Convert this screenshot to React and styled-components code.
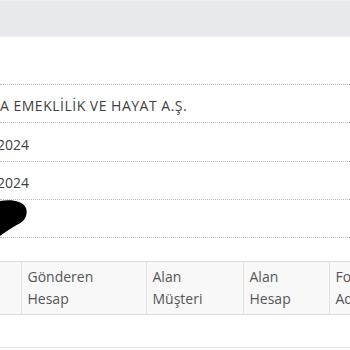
import React from "react";
import styled, { createGlobalStyle } from "styled-components";

const GlobalStyle = createGlobalStyle`
  html, body {
    margin: 0;
    padding: 0;
    background: #fff;
    font-family: "Open Sans", "Liberation Sans", sans-serif;
    overflow: hidden;
  }
`;

const Page = styled.div`
  width: 350px;
  height: 350px;
  overflow: hidden;
  display: flex;
  flex-direction: column;
`;

const TopBand = styled.div`
  height: 35px;
  background: #e7e9ec;
  border-top: 1px solid #eff0f2;
  border-bottom: 1px solid #eef0f2;
`;

const InfoList = styled.div`
  margin-top: 47px;
  display: flex;
  flex-direction: column;
  border-bottom: 1px dotted #bdbdbd;
`;

const InfoRow = styled.div`
  height: ${(p) => p.$h || 37}px;
  border-top: 1px dotted #bdbdbd;
  display: flex;
  align-items: center;
  position: relative;
  font-size: 14px;
  color: #404040;
  white-space: nowrap;
`;

const Value = styled.span`
  margin-left: ${(p) => p.$cut || 0}px;
  padding-top: 4px;
  letter-spacing: ${(p) => p.$ls || 0}px;
`;

const Blot = styled.svg`
  position: absolute;
  left: 0;
  top: 0;
`;

const Table = styled.table`
  margin-top: 23px;
  width: 400px;
  border-collapse: collapse;
  table-layout: fixed;
  font-size: 14px;
  color: #555;
`;

const HeadCell = styled.th`
  width: ${(p) => p.$w}px;
  height: 53px;
  padding: 0 6px;
  text-align: left;
  font-weight: 400;
  line-height: 22px;
  vertical-align: middle;
  background: #f8f8f8;
  border-top: 1px solid #dcdcdc;
  border-bottom: 1px solid #dcdcdc;
  border-right: 1px solid #e2e2e2;
  box-sizing: border-box;
  overflow: hidden;
  white-space: nowrap;
`;

const BodyCell = styled.td`
  height: 30px;
  border-bottom: 1px solid #e4e4e4;
`;

const columns = [
  { w: 21, label: ["", ""] },
  { w: 125, label: ["Gönderen", "Hesap"] },
  { w: 97, label: ["Alan", "Müşteri"] },
  { w: 86, label: ["Alan", "Hesap"] },
  { w: 71, label: ["Fon", "Adı"] },
];

function App() {
  return (
    <Page>
      <GlobalStyle />
      <TopBand />
      <InfoList>
        <InfoRow>
          <Value $ls={0.5}>A EMEKLİLİK VE HAYAT A.Ş.</Value>
        </InfoRow>
        <InfoRow $h={38}>
          <Value $cut={-3}>2024</Value>
        </InfoRow>
        <InfoRow>
          <Value $cut={-3}>2024</Value>
        </InfoRow>
        <InfoRow>
          <Blot width="30" height="38" viewBox="0 0 30 38">
            <path
              d="M0 1 C6 0 14 0 19 2 C25 4 27.5 9 26.5 14 C25.5 20 21 23 15 26 C10 29 5 32 0 36 Z"
              fill="#000"
            />
          </Blot>
        </InfoRow>
      </InfoList>
      <Table>
        <thead>
          <tr>
            {columns.map((c, i) => (
              <HeadCell key={i} $w={c.w}>
                {c.label[0]}
                <br />
                {c.label[1]}
              </HeadCell>
            ))}
          </tr>
        </thead>
        <tbody>
          <tr>
            {columns.map((c, i) => (
              <BodyCell key={i} />
            ))}
          </tr>
        </tbody>
      </Table>
    </Page>
  );
}

export default App;
